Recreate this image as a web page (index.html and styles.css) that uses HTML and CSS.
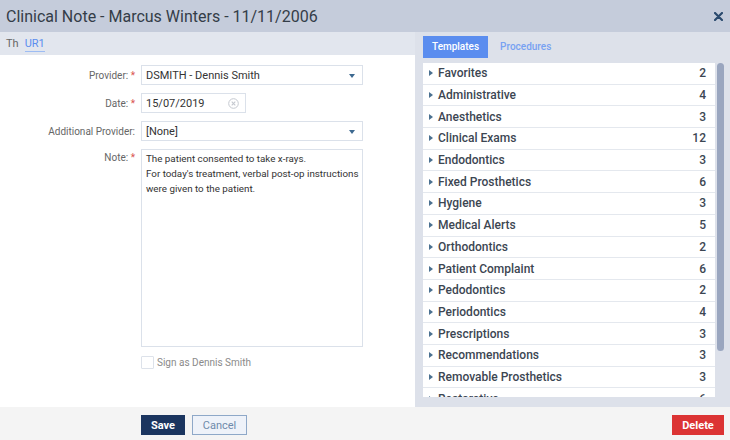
FILE: index.html
```html
<!DOCTYPE html>
<html lang="en">
<head>
  <meta charset="UTF-8" />
  <title>Clinical Note</title>
  <link rel="stylesheet" href="styles.css">
</head>
<body>
  <div class="dialog">
    <div class="header">
      <span class="title">Clinical Note - Marcus Winters - 11/11/2006</span>
      <span class="close">
        <svg width="9" height="9" viewBox="0 0 9 9"><path d="M1 1L8 8M8 1L1 8" stroke="#2b4a6e" stroke-width="2.2" stroke-linecap="round"/></svg>
      </span>
    </div>

    <div class="body">
      <div class="left">
        <div class="subtabs">
          <span class="subtab">Th</span>
          <span class="subtab active">UR1</span>
        </div>
        <div class="form">
          <div class="row">
            <label>Provider: <b>*</b></label>
            <div class="field select">DSMITH - Dennis Smith<i class="caret"></i></div>
          </div>
          <div class="row">
            <label>Date: <b>*</b></label>
            <div class="field date">15/07/2019
              <svg class="clear" width="11" height="11" viewBox="0 0 11 11"><circle cx="5.5" cy="5.5" r="4.8" fill="none" stroke="#c4c8cf" stroke-width="1"/><path d="M3.7 3.7L7.3 7.3M7.3 3.7L3.7 7.3" stroke="#c4c8cf" stroke-width="1.1"/></svg>
            </div>
          </div>
          <div class="row">
            <label>Additional Provider:</label>
            <div class="field select">[None]<i class="caret"></i></div>
          </div>
          <div class="row top">
            <label>Note: <b>*</b></label>
            <div class="field note">The patient consented to take x-rays.<br>For today's treatment, verbal post-op instructions were given to the patient.</div>
          </div>
          <div class="row check">
            <label></label>
            <span class="box"></span><span class="sign">Sign as Dennis Smith</span>
          </div>
        </div>
      </div>

      <div class="right">
        <div class="tabs">
          <span class="tab active">Templates</span>
          <span class="tab">Procedures</span>
        </div>
        <div class="listwrap">
          <div class="list">
            <div class="item"><i class="arrow"></i><span class="name">Favorites</span><span class="count">2</span></div>
            <div class="item"><i class="arrow"></i><span class="name">Administrative</span><span class="count">4</span></div>
            <div class="item"><i class="arrow"></i><span class="name">Anesthetics</span><span class="count">3</span></div>
            <div class="item"><i class="arrow"></i><span class="name">Clinical Exams</span><span class="count">12</span></div>
            <div class="item"><i class="arrow"></i><span class="name">Endodontics</span><span class="count">3</span></div>
            <div class="item"><i class="arrow"></i><span class="name">Fixed Prosthetics</span><span class="count">6</span></div>
            <div class="item"><i class="arrow"></i><span class="name">Hygiene</span><span class="count">3</span></div>
            <div class="item"><i class="arrow"></i><span class="name">Medical Alerts</span><span class="count">5</span></div>
            <div class="item"><i class="arrow"></i><span class="name">Orthodontics</span><span class="count">2</span></div>
            <div class="item"><i class="arrow"></i><span class="name">Patient Complaint</span><span class="count">6</span></div>
            <div class="item"><i class="arrow"></i><span class="name">Pedodontics</span><span class="count">2</span></div>
            <div class="item"><i class="arrow"></i><span class="name">Periodontics</span><span class="count">4</span></div>
            <div class="item"><i class="arrow"></i><span class="name">Prescriptions</span><span class="count">3</span></div>
            <div class="item"><i class="arrow"></i><span class="name">Recommendations</span><span class="count">3</span></div>
            <div class="item"><i class="arrow"></i><span class="name">Removable Prosthetics</span><span class="count">3</span></div>
            <div class="item"><i class="arrow"></i><span class="name">Restorative</span><span class="count">6</span></div>
          </div>
          <div class="scrollbar"><div class="thumb"></div></div>
        </div>
      </div>
    </div>

    <div class="footer">
      <div class="actions">
        <button class="btn save">Save</button>
        <button class="btn cancel">Cancel</button>
      </div>
      <button class="btn delete">Delete</button>
    </div>
  </div>
</body>
</html>
```

FILE: styles.css
```css
body {
  margin: 0;
  font-family: Roboto, "Liberation Sans", sans-serif;
  color: #333;
}

.dialog {
  width: 730px;
  height: 440px;
  display: flex;
  flex-direction: column;
  overflow: hidden;
}

.header {
  height: 32px;
  flex: none;
  background-color: #c5ccdb;
  display: flex;
  align-items: center;
  justify-content: space-between;
  padding: 0 7px 0 6px;
}

.title {
  font-size: 16px;
  color: #343d48;
}

.close {
  display: flex;
  margin-top: 1px;
}

.body {
  height: 375px;
  flex: none;
  display: flex;
}

.left {
  width: 415px;
  display: flex;
  flex-direction: column;
}

.subtabs {
  height: 23px;
  background-color: #e2e6ee;
  display: flex;
  align-items: center;
  padding-left: 6px;
  gap: 6px;
  font-size: 11px;
}

.subtab {
  color: #666;
}

.subtab.active {
  color: #5b8def;
  padding-bottom: 1px;
  border-bottom: 1px solid #9dbcf3;
  margin-top: 2px;
}

.form {
  flex: 1;
  background-color: #fff;
  padding-top: 10px;
  display: flex;
  flex-direction: column;
  gap: 8px;
}

.row {
  display: flex;
  align-items: center;
}

.row.top {
  align-items: flex-start;
}

.row label {
  width: 135px;
  flex: none;
  text-align: right;
  padding-right: 6px;
  font-size: 10px;
  color: #666;
}

.row label b {
  color: #d9534f;
  font-weight: normal;
}

.row.top label {
  padding-top: 3px;
}

.field {
  box-sizing: border-box;
  border: 1px solid #dbe1ea;
  height: 20px;
  font-size: 11px;
  color: #333;
  padding: 0 4px;
  display: flex;
  align-items: center;
  position: relative;
}

.select {
  width: 222px;
}

.caret {
  position: absolute;
  right: 7px;
  top: 8px;
  border-left: 3.5px solid transparent;
  border-right: 3.5px solid transparent;
  border-top: 4px solid #3d6990;
}

.date {
  width: 105px;
}

.clear {
  position: absolute;
  right: 6px;
  top: 4px;
}

.note {
  width: 222px;
  height: 198px;
  display: block;
  padding: 1px 0 1px 4px;
  font-size: 9.8px;
  line-height: 15px;
}

.row.check {
  margin-top: 1px;
}

.box {
  width: 11px;
  height: 11px;
  border: 1px solid #dde2ea;
  border-radius: 1px;
}

.sign {
  font-size: 10px;
  color: #8a8a8a;
  margin-left: 3px;
}

.right {
  flex: 1;
  background-color: #dde1ea;
  padding: 4px 6px 0 8px;
  display: flex;
  flex-direction: column;
}

.tabs {
  display: flex;
  align-items: center;
  height: 22px;
  font-size: 10px;
  font-weight: 500;
}

.tab {
  color: #78a2f2;
  padding: 0 11px;
  line-height: 22px;
}

.tab.active {
  background-color: #5b8def;
  color: #fff;
  padding: 0 9px;
  margin-right: 1px;
}

.listwrap {
  margin-top: 5px;
  height: 334px;
  display: flex;
  gap: 2px;
}

.list {
  flex: 1;
  overflow: hidden;
  background-color: #fff;
}

.item {
  height: 20.7px;
  border-bottom: 1px solid #e4e8ee;
  display: flex;
  align-items: center;
  padding: 0 9px 0 6px;
  font-size: 12px;
  font-weight: 500;
  color: #3c4652;
}

.arrow {
  border-top: 3px solid transparent;
  border-bottom: 3px solid transparent;
  border-left: 4px solid #4a7090;
  margin-right: 5px;
}

.name {
  flex: 1;
}

.scrollbar {
  width: 7px;
}

.thumb {
  height: 288px;
  background-color: #9aa6bf;
  border-radius: 4px;
}

.footer {
  flex: 1;
  background-color: #f4f4f4;
  display: flex;
  align-items: center;
  justify-content: space-between;
  padding: 3px 6px 0 141px;
}

.actions {
  display: flex;
  gap: 7px;
}

.btn {
  height: 20px;
  font-family: Roboto, "Liberation Sans", sans-serif;
  font-size: 11px;
  border: 1px solid transparent;
  padding: 0;
  cursor: pointer;
}

.save {
  width: 44px;
  background-color: #1b355f;
  color: #fff;
  font-weight: bold;
}

.cancel {
  width: 55px;
  background-color: #eef2f9;
  border-color: #8ea8c8;
  color: #6e8aab;
}

.delete {
  width: 52px;
  background-color: #dc3434;
  color: #fff;
  font-weight: bold;
}
```
